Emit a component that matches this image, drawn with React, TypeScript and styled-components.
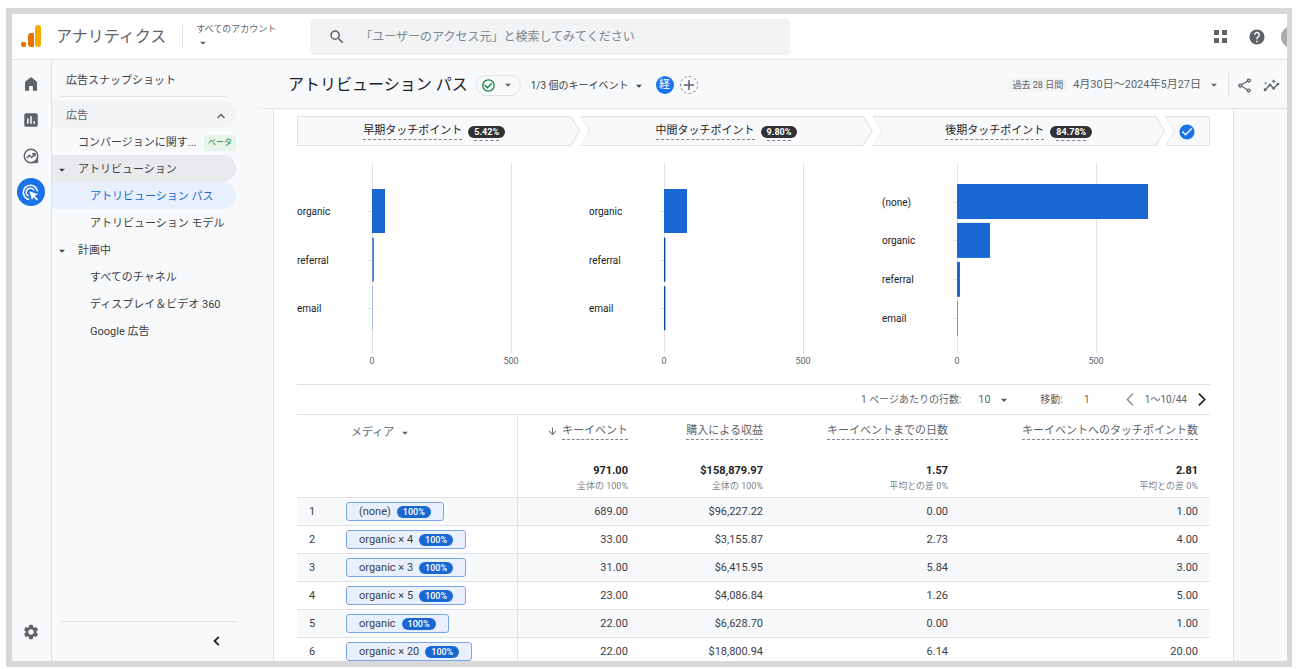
import React from 'react';
import styled, { createGlobalStyle, css } from 'styled-components';
import {
  MdArrowDownward,
  MdArrowDropDown,
  MdCheckCircle,
  MdCheckCircleOutline,
  MdHelp,
  MdInsights,
  MdSearch,
  MdSettings,
  MdOutlineShare,
} from 'react-icons/md';

const color = {
  frame: '#d8d8d8',
  surface: '#f8f9fb',
  line: '#dfe1e5',
  text: '#202124',
  body: '#3c4043',
  muted: '#5f6368',
  faint: '#80868b',
  blue: '#1a73e8',
  bar: '#1967d2',
};

const GlobalStyle = createGlobalStyle`
  *, *::before, *::after { box-sizing: border-box; }
  body {
    margin: 0;
    background: #fff;
    color: ${color.text};
    font-family: Roboto, "Noto Sans CJK JP", sans-serif;
    font-size: 11px;
    line-height: 16px;
  }
  button, input, select { font: inherit; color: inherit; }
  a { color: inherit; text-decoration: none; }
  svg { display: block; flex: none; }
`;

/* ---------- shell ---------- */

const Screen = styled.div`
  height: 100vh;
  padding: 8px 4px 2px 6px;
`;

const Frame = styled.div`
  display: flex;
  flex-direction: column;
  height: 100%;
  border: 6px solid ${color.frame};
  border-right-width: 5px;
  overflow: hidden;
`;

const Body = styled.div`
  display: flex;
  flex: 1;
  min-height: 0;
  background: ${color.surface};
`;

const PlainButton = styled.button`
  display: inline-flex;
  align-items: center;
  justify-content: center;
  padding: 0;
  border: 0;
  background: none;
  cursor: pointer;
`;

/* ---------- top bar ---------- */

const TopBar = styled.header`
  display: flex;
  align-items: center;
  flex: none;
  height: 46px;
  padding-left: 9px;
  border-bottom: 1px solid ${color.line};
  background: #fff;
`;

const Brand = styled.a`
  display: flex;
  align-items: center;
  gap: 15px;
  margin-right: 3px;
  color: ${color.muted};
  font-size: 16px;
  line-height: 24px;
`;

const Divider = styled.span<{ $space: number }>`
  width: 1px;
  height: 24px;
  margin: 0 ${(p) => p.$space}px;
  background: ${color.line};
`;

const Account = styled(PlainButton)`
  flex-direction: column;
  align-items: flex-start;
  width: 114px;
  color: ${color.muted};
  font-size: 9px;
  line-height: 13px;
`;

const SearchBox = styled.label`
  display: flex;
  align-items: center;
  flex: 0 1 480px;
  height: 36px;
  padding: 0 18px;
  gap: 14px;
  border-radius: 4px;
  background: #f1f3f4;
  color: ${color.muted};
`;

const SearchInput = styled.input`
  flex: 1;
  min-width: 0;
  padding: 0;
  border: 0;
  outline: 0;
  background: none;
  font-size: 12px;
  &::placeholder { color: ${color.faint}; opacity: 1; }
`;

const TopActions = styled.div`
  display: flex;
  align-items: center;
  gap: 20px;
  margin-left: auto;
  color: ${color.muted};
`;

const AvatarSlot = styled(PlainButton)`
  justify-content: flex-start;
  width: 6px;
  margin-left: -5px;
  overflow: hidden;
`;

const Avatar = styled.span`
  flex: none;
  width: 22px;
  height: 22px;
  border-radius: 50%;
  background: #aaa;
`;

/* ---------- icon rail ---------- */

const Rail = styled.nav`
  display: flex;
  flex-direction: column;
  align-items: center;
  flex: none;
  width: 40px;
  padding: 10px 2px 15px 0;
  gap: 8px;
  border-right: 1px solid ${color.line};
  color: ${color.muted};
`;

const RailButton = styled(PlainButton)<{ $active?: boolean; $end?: boolean }>`
  width: 28px;
  height: 28px;
  border-radius: 50%;
  ${(p) => p.$active && css`background: ${color.blue}; color: #fff;`}
  ${(p) => p.$end && css`margin-top: auto;`}
`;

/* ---------- side navigation ---------- */

const SideNav = styled.nav`
  display: flex;
  flex-direction: column;
  flex: none;
  width: 199px;
  padding-right: 15px;
  color: ${color.body};
`;

const NavRow = styled.a<{ $level: number; $tone?: 'section' | 'open' | 'active' }>`
  display: flex;
  align-items: center;
  height: 27px;
  padding-top: 2px;
  padding-right: 10px;
  padding-left: ${(p) => [14, 26, 38][p.$level]}px;
  border-radius: 0 14px 14px 0;
  white-space: nowrap;
  ${(p) => p.$tone === 'section' && css`background: #f1f3f4; color: ${color.muted};`}
  ${(p) => p.$tone === 'open' && css`background: #e8eaed;`}
  ${(p) => p.$tone === 'active' && css`background: #e8f0fe; color: ${color.bar};`}
`;

const NavTop = styled.div`
  padding: 6px 0;
  margin: 0 9px 4px 8px;
  height: 37px;
  border-bottom: 1px solid ${color.line};
  & > a { padding-left: 6px; }
`;

const NavCaret = styled.span`
  display: flex;
  width: 23px;
  margin-left: -23px;
`;

const RowEnd = styled.span`
  margin-left: auto;
`;

const BetaBadge = styled.span`
  margin-left: auto;
  margin-right: -10px;
  padding: 0 4px;
  border-radius: 2px;
  background: #e6f4ea;
  color: #188038;
  font-size: 8px;
`;

const NavFoot = styled.div`
  display: flex;
  justify-content: flex-end;
  margin: auto 0 0 9px;
  padding: 13px 13px 14px;
  border-top: 1px solid ${color.line};
  color: ${color.text};
`;

/* ---------- report ---------- */

const Main = styled.main`
  display: flex;
  flex-direction: column;
  flex: 1;
  min-width: 0;
`;

const Toolbar = styled.div`
  display: flex;
  align-items: center;
  flex: none;
  height: 49px;
  padding: 2px 7px 1px 37px;
  background: linear-gradient(to right, transparent, ${color.line} 32px) bottom / 100% 1px no-repeat;
`;

const Title = styled.h1`
  margin: 0 8px 0 0;
  font-size: 16px;
  font-weight: 400;
  line-height: 24px;
`;

const StatusButton = styled(PlainButton)`
  gap: 5px;
  width: 45px;
  height: 21px;
  border: 1px solid ${color.line};
  border-radius: 11px;
  color: ${color.muted};
  & > svg:first-child { color: #188038; }
`;

const EventButton = styled(PlainButton)`
  gap: 3px;
  margin: 0 10px 0 10px;
  padding-top: 1px;
  color: ${color.body};
  font-size: 10px;
`;

const Segment = styled(PlainButton)<{ $add?: boolean }>`
  width: 18px;
  height: 18px;
  margin-right: 6px;
  border-radius: 50%;
  background: ${color.blue};
  color: #fff;
  ${(p) => p.$add && css`
    border: 1px dashed ${color.faint};
    background: none;
    color: ${color.muted};
  `}
`;

const ToolbarEnd = styled.div`
  display: flex;
  align-items: center;
  margin-left: auto;
  color: ${color.muted};
`;

const DateButton = styled(PlainButton)`
  gap: 6px;
  white-space: nowrap;
`;

const PeriodTag = styled.span`
  padding: 0 4px;
  border-radius: 2px;
  background: #f1f3f4;
  font-size: 9px;
  line-height: 14px;
`;

const IconGroup = styled.div`
  display: flex;
  gap: 10px;
`;

const Panel = styled.section`
  display: flex;
  flex-direction: column;
  flex: 1;
  min-height: 0;
  margin: 0 53px 0 22px;
  padding: 7px 23px 0;
  border: 1px solid ${color.line};
  border-width: 0 1px;
  background: #fff;
  overflow: hidden;
`;

const Columns = styled.div`
  display: grid;
  grid-template-columns: repeat(3, 1fr) 36px;
  flex: none;
`;

/* The first step is shorter by one arrow tip, so that each tip ends where the next step begins. */
const Steps = styled.div`
  display: grid;
  grid-template-columns: calc((100% - 36px) / 3 - 9px) repeat(2, calc((100% - 36px) / 3)) 1fr;
  flex: none;
`;

const Step = styled.div<{ $shape: string; $first?: boolean }>`
  display: flex;
  align-items: center;
  justify-content: center;
  position: relative;
  height: 30px;
  gap: 6px;
  padding-top: 1px;
  padding-right: ${(p) => (p.$first ? 9 : 0)}px;
  white-space: nowrap;
  isolation: isolate;
  background: ${color.line};
  clip-path: polygon(${(p) => p.$shape});
  &::before {
    content: '';
    position: absolute;
    inset: 1px;
    z-index: -1;
    background: ${color.surface};
    clip-path: polygon(${(p) => p.$shape});
  }
`;

const shapes = {
  first: '0 0, calc(100% - 9px) 0, 100% 50%, calc(100% - 9px) 100%, 0 100%',
  middle: '0 0, calc(100% - 9px) 0, 100% 50%, calc(100% - 9px) 100%, 0 100%, 9px 50%',
  last: '0 0, 100% 0, 100% 100%, 0 100%, 9px 50%',
};

const Dashed = styled.span`
  display: inline-block;
  border-bottom: 1px dashed ${color.faint};
`;

const SharePill = styled.span`
  position: relative;
  padding: 0 6px;
  border-radius: 6px;
  background: #303134;
  color: #fff;
  font-size: 9px;
  font-weight: 700;
  line-height: 12px;
  &::after {
    content: '';
    position: absolute;
    right: 6px;
    bottom: -3px;
    left: 6px;
    border-bottom: 1px dashed ${color.faint};
  }
`;

const Chart = styled.svg`
  width: 100%;
  height: 238px;
  font-size: 10px;
`;

/* ---------- table ---------- */

const Pager = styled.div`
  display: flex;
  align-items: center;
  justify-content: flex-end;
  flex: none;
  height: 30px;
  padding-right: 2px;
  border-top: 1px solid ${color.line};
  color: ${color.muted};
  font-size: 10px;
`;

const SelectWrap = styled.span`
  display: flex;
  align-items: center;
  margin: 0 28px 0 17px;
`;

const RowsSelect = styled.select`
  width: 31px;
  margin-right: -13px;
  padding: 0;
  border: 0;
  outline: 0;
  appearance: none;
  background: none;
  font-size: 11px;
`;

const PageInput = styled.input`
  width: 24px;
  margin: 0 25px 0 12px;
  padding: 0;
  border: 0;
  outline: 0;
  background: none;
  text-align: center;
`;

const PageButton = styled(PlainButton)`
  color: ${color.text};
  &:disabled { color: ${color.faint}; }
`;

const Range = styled.span`
  margin: 0 8px;
`;

const DataTable = styled.table`
  width: 100%;
  table-layout: fixed;
  border-collapse: collapse;
  color: ${color.body};
`;

const Col = styled.col<{ $width?: number }>`
  width: ${(p) => (p.$width ? `${p.$width}px` : 'auto')};
`;

const Row = styled.tr<{ $shaded?: boolean }>`
  height: 28px;
  border-top: 1px solid ${color.line};
  background: ${(p) => (p.$shaded ? color.surface : '#fff')};
`;

const HeadRow = styled.tr`
  height: 48px;
  border-top: 1px solid ${color.line};
  color: ${color.muted};
`;

const TotalRow = styled.tr`
  height: 35px;
`;

const Cell = styled.td<{ $num?: boolean; $edge?: boolean; $top?: boolean }>`
  padding: 0 12px;
  text-align: ${(p) => (p.$num ? 'right' : 'left')};
  vertical-align: ${(p) => (p.$top ? 'top' : 'middle')};
  font-weight: 400;
  white-space: nowrap;
  ${(p) => p.$edge && css`border-right: 1px solid ${color.line};`}
`;

const HeadCell = styled(Cell)`
  padding-top: 8px;
`;

const HeadLabel = styled.span`
  display: inline-flex;
  align-items: center;
  gap: 4px;
`;

const MediaButton = styled(PlainButton)`
  gap: 4px;
  padding: 2px 5px 0;
`;

const Total = styled.strong`
  display: block;
  color: ${color.text};
  font-weight: 700;
  line-height: 16px;
`;

const TotalNote = styled.span`
  display: block;
  color: ${color.faint};
  font-size: 9px;
  line-height: 15px;
`;

const Chip = styled.span`
  display: inline-flex;
  align-items: center;
  gap: 6px;
  height: 19px;
  padding: 0 12px;
  border: 1px solid #7ba4ea;
  border-radius: 3px;
  background: #e8f0fe;
  vertical-align: middle;
`;

const ChipPill = styled.span`
  padding: 0 6px;
  border-radius: 6px;
  background: ${color.bar};
  color: #fff;
  font-size: 9px;
  font-weight: 500;
  line-height: 12px;
`;

/* ---------- icons ---------- */

const LogoIcon = () => (
  <svg width="20" height="23" viewBox="0 0 20 23" aria-hidden="true">
    <rect x="14" y="0" width="6" height="22" rx="3" fill="#f9ab00" />
    <path d="M13 8v14H10a3 3 0 0 1-3-3v-8a3 3 0 0 1 3-3z" fill="#e37400" />
    <circle cx="2.6" cy="19.4" r="2.6" fill="#e37400" />
  </svg>
);

const HomeIcon = () => (
  <svg width="18" height="18" viewBox="0 0 24 24" fill="currentColor" aria-hidden="true">
    <path d="M4 21V9.6q0-.6.5-1L11.200 3.400q.8-.6 1.600 0l6.700 5.200q.5.4.5 1V21h-5.500v-5.500q0-1-1-1h-3q-1 0-1 1V21z" />
  </svg>
);

const ReportsIcon = () => (
  <svg width="18" height="18" viewBox="0 0 24 24" aria-hidden="true">
    <rect x="3" y="3" width="18" height="18" rx="2.500" fill="currentColor" />
    <path d="M7.800 10v7M12 7v10M16.200 13.500V17" stroke="#fff" strokeWidth="2" />
  </svg>
);

const ExploreIcon = () => (
  <svg width="18" height="18" viewBox="0 0 24 24" fill="none" stroke="currentColor" strokeWidth="2" aria-hidden="true">
    <circle cx="12" cy="12" r="9" />
    <path d="M6.500 14.500l3.500-3.500 3 3 4-4.500M13.500 9H17.300v3.800" />
    <path d="M21 13.500V21h-7.500q5.500-1.500 7.500-7.500z" fill="currentColor" strokeWidth="1" />
  </svg>
);

const AdsIcon = () => (
  <svg width="19" height="19" viewBox="0 0 24 24" fill="none" stroke="currentColor" strokeWidth="2" aria-hidden="true">
    <path d="M10.500 20.800A9 9 0 1 1 20.800 10.500" />
    <path d="M9.500 16.600A5.300 5.300 0 1 1 16.600 9.500" />
    <path d="M10.500 10.500l11 3.700-4.300 2 4.300 4.300-1.600 1.600-4.300-4.300-1.700 4z" fill="currentColor" stroke="none" />
  </svg>
);

const AppsIcon = () => (
  <svg width="15" height="15" viewBox="0 0 15 15" fill="currentColor" aria-hidden="true">
    <path d="M1 1h5v5H1zM9 1h5v5H9zM1 9h5v5H1zM9 9h5v5H9z" />
  </svg>
);

const Chevron = ({ d, size = 10, width = 1.5 }: { d: string; size?: number; width?: number }) => (
  <svg width={size} height={size} viewBox="0 0 10 10" fill="none" stroke="currentColor" strokeWidth={width} aria-hidden="true">
    <path d={d} />
  </svg>
);

const chevron = {
  up: 'M1.500 7 5 3.500 8.500 7',
  left: 'M7 .5 2.500 5 7 9.500',
  right: 'M3 .5 7.500 5 3 9.500',
  collapse: 'M6.500 1.500 3 5 6.500 8.500',
};

/* ---------- data ---------- */

const navItems = [
  { label: 'アトリビューション', level: 1, caret: true, tone: 'open' as const },
  { label: 'アトリビューション パス', level: 2, tone: 'active' as const },
  { label: 'アトリビューション モデル', level: 2 },
  { label: '計画中', level: 1, caret: true },
  { label: 'すべてのチャネル', level: 2 },
  { label: 'ディスプレイ＆ビデオ 360', level: 2 },
  { label: 'Google 広告', level: 2 },
];

type Bar = { label: string; width: number; fill?: string };

const stages: { label: string; share: string; shape: string; bars: Bar[] }[] = [
  {
    label: '早期タッチポイント', share: '5.42%', shape: shapes.first,
    bars: [{ label: 'organic', width: 13 }, { label: 'referral', width: 2, fill: '#5b86d8' }, { label: 'email', width: 1, fill: '#a9bdec' }],
  },
  {
    label: '中間タッチポイント', share: '9.80%', shape: shapes.middle,
    bars: [{ label: 'organic', width: 23 }, { label: 'referral', width: 1.4, fill: '#0d47a1' }, { label: 'email', width: 1.4, fill: '#0d47a1' }],
  },
  {
    label: '後期タッチポイント', share: '84.78%', shape: shapes.middle,
    bars: [{ label: '(none)', width: 191 }, { label: 'organic', width: 33 }, { label: 'referral', width: 3 }, { label: 'email', width: 1, fill: '#5e94e0' }],
  },
];

const totals = [
  ['971.00', '全体の 100%'],
  ['$158,879.97', '全体の 100%'],
  ['1.57', '平均との差 0%'],
  ['2.81', '平均との差 0%'],
];

const rows = [
  ['(none)', '689.00', '$96,227.22', '0.00', '1.00'],
  ['organic × 4', '33.00', '$3,155.87', '2.73', '4.00'],
  ['organic × 3', '31.00', '$6,415.95', '5.84', '3.00'],
  ['organic × 5', '23.00', '$4,086.84', '1.26', '5.00'],
  ['organic', '22.00', '$6,628.70', '0.00', '1.00'],
  ['organic × 20', '22.00', '$18,800.94', '6.14', '20.00'],
];

/* Horizontal bars on a 0–500 axis; bands share the plot height evenly. */
const BarChart = ({ bars }: { bars: Bar[] }) => {
  const axisX = 75;
  const band = bars.length === 3 ? 48.6 : 38.9;
  const barHeight = bars.length === 3 ? 44 : 35;
  const top = bars.length === 3 ? 43 : 38;
  return (
    <Chart role="img" aria-label={bars.map((b) => b.label).join(', ')}>
      <path d={`M${axisX + 0.5} 18v189M${axisX + 139.5} 18v189`} stroke={color.line} />
      {bars.map((bar, i) => {
        const y = top + band * i;
        return (
          <g key={bar.label}>
            <path d={`M${axisX - 4} ${Math.round(y + barHeight / 2) + 0.5}h4`} stroke={color.line} />
            <rect x={axisX} y={y} width={bar.width} height={barHeight} fill={bar.fill ?? color.bar} />
            <text x="0" y={y + barHeight / 2 + 4} fill={color.text}>{bar.label}</text>
          </g>
        );
      })}
      <g fontSize="9" fill={color.muted} textAnchor="middle">
        <text x={axisX} y="218">0</text>
        <text x={axisX + 139} y="218">500</text>
      </g>
    </Chart>
  );
};

export default function App() {
  return (
    <Screen>
      <GlobalStyle />
      <Frame>
        <TopBar>
          <Brand href="#home"><LogoIcon />アナリティクス</Brand>
          <Divider $space={13} />
          <Account>すべてのアカウント<MdArrowDropDown size={14} /></Account>
          <SearchBox>
            <MdSearch size={18} />
            <SearchInput type="search" aria-label="検索" placeholder="「ユーザーのアクセス元」と検索してみてください" />
          </SearchBox>
          <TopActions>
            <PlainButton aria-label="アプリ"><AppsIcon /></PlainButton>
            <PlainButton aria-label="ヘルプ"><MdHelp size={18} /></PlainButton>
            <AvatarSlot aria-label="アカウント"><Avatar /></AvatarSlot>
          </TopActions>
        </TopBar>

        <Body>
          <Rail aria-label="メイン">
            <RailButton aria-label="ホーム"><HomeIcon /></RailButton>
            <RailButton aria-label="レポート"><ReportsIcon /></RailButton>
            <RailButton aria-label="探索"><ExploreIcon /></RailButton>
            <RailButton $active aria-label="広告"><AdsIcon /></RailButton>
            <RailButton $end aria-label="管理"><MdSettings size={18} /></RailButton>
          </Rail>

          <SideNav aria-label="広告">
            <NavTop><NavRow href="#snapshot" $level={0}>広告スナップショット</NavRow></NavTop>
            <NavRow href="#ads" $level={0} $tone="section">
              広告<RowEnd><Chevron d={chevron.up} /></RowEnd>
            </NavRow>
            <NavRow href="#conversions" $level={1}>
              コンバージョンに関す...<BetaBadge>ベータ</BetaBadge>
            </NavRow>
            {navItems.map((item) => (
              <NavRow key={item.label} href="#report" $level={item.level} $tone={item.tone}>
                {item.caret && <NavCaret><MdArrowDropDown size={14} /></NavCaret>}
                {item.label}
              </NavRow>
            ))}
            <NavFoot>
              <PlainButton aria-label="折りたたむ"><Chevron d={chevron.collapse} size={12} width={1.5} /></PlainButton>
            </NavFoot>
          </SideNav>

          <Main>
            <Toolbar>
              <Title>アトリビューション パス</Title>
              <StatusButton aria-label="ステータス"><MdCheckCircleOutline size={15} /><MdArrowDropDown size={14} /></StatusButton>
              <EventButton>1/3 個のキーイベント<MdArrowDropDown size={14} /></EventButton>
              <Segment>経</Segment>
              <Segment $add aria-label="比較を追加">
                <svg width="12" height="12" viewBox="0 0 12 12" stroke="currentColor" strokeWidth="1.500" aria-hidden="true">
                  <path d="M6 1v10M1 6h10" />
                </svg>
              </Segment>
              <ToolbarEnd>
                <DateButton>
                  <PeriodTag>過去 28 日間</PeriodTag>4月30日〜2024年5月27日<MdArrowDropDown size={14} />
                </DateButton>
                <Divider $space={7} />
                <IconGroup>
                  <PlainButton aria-label="共有"><MdOutlineShare size={17} /></PlainButton>
                  <PlainButton aria-label="分析情報"><MdInsights size={17} /></PlainButton>
                </IconGroup>
              </ToolbarEnd>
            </Toolbar>

            <Panel>
              <Steps>
                {stages.map((stage, i) => (
                  <Step key={stage.label} $shape={stage.shape} $first={i === 0}>
                    <Dashed>{stage.label}</Dashed>
                    <SharePill>{stage.share}</SharePill>
                  </Step>
                ))}
                <Step $shape={shapes.last}><MdCheckCircle size={18} color={color.blue} /></Step>
              </Steps>
              <Columns>
                {stages.map((stage) => <BarChart key={stage.label} bars={stage.bars} />)}
              </Columns>

              <Pager>
                <label htmlFor="rows">1 ページあたりの行数:</label>
                <SelectWrap>
                  <RowsSelect id="rows" defaultValue="10"><option>10</option><option>25</option></RowsSelect>
                  <MdArrowDropDown size={16} />
                </SelectWrap>
                <label htmlFor="page">移動:</label>
                <PageInput id="page" defaultValue="1" />
                <PageButton disabled aria-label="前へ"><Chevron d={chevron.left} size={13} width={1} /></PageButton>
                <Range>1〜10/44</Range>
                <PageButton aria-label="次へ"><Chevron d={chevron.right} size={13} width={1.3} /></PageButton>
              </Pager>

              <DataTable>
                <colgroup>
                  <Col $width={37} /><Col $width={183} /><Col $width={123} /><Col $width={135} /><Col $width={185} /><Col />
                </colgroup>
                <thead>
                  <HeadRow>
                    <HeadCell as="th" $top />
                    <HeadCell as="th" $edge $top><MediaButton>メディア<MdArrowDropDown size={14} /></MediaButton></HeadCell>
                    <HeadCell as="th" $num $top>
                      <HeadLabel><MdArrowDownward size={11} /><Dashed>キーイベント</Dashed></HeadLabel>
                    </HeadCell>
                    <HeadCell as="th" $num $top><Dashed>購入による収益</Dashed></HeadCell>
                    <HeadCell as="th" $num $top><Dashed>キーイベントまでの日数</Dashed></HeadCell>
                    <HeadCell as="th" $num $top><Dashed>キーイベントへのタッチポイント数</Dashed></HeadCell>
                  </HeadRow>
                  <TotalRow>
                    <Cell />
                    <Cell $edge />
                    {totals.map(([value, note], i) => (
                      <Cell key={i} $num $top><Total>{value}</Total><TotalNote>{note}</TotalNote></Cell>
                    ))}
                  </TotalRow>
                </thead>
                <tbody>
                  {rows.map(([media, ...values], i) => (
                    <Row key={media} $shaded={i % 2 === 0}>
                      <Cell>{i + 1}</Cell>
                      <Cell $edge><Chip>{media}<ChipPill>100%</ChipPill></Chip></Cell>
                      {values.map((value, j) => <Cell key={j} $num>{value}</Cell>)}
                    </Row>
                  ))}
                </tbody>
              </DataTable>
            </Panel>
          </Main>
        </Body>
      </Frame>
    </Screen>
  );
}
